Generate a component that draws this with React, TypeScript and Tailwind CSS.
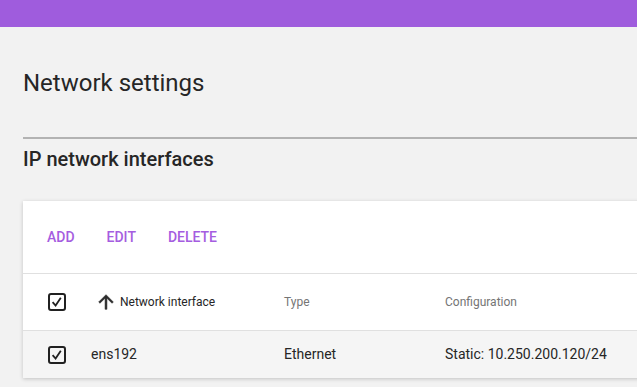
import React from "react";

function CheckIcon() {
  return (
    <svg viewBox="0 0 18 18" className="w-[18px] h-[18px] shrink-0">
      <rect x="1" y="1" width="16" height="16" rx="2" fill="none" stroke="#212121" strokeWidth="2" />
      <path d="M4.6 9.2 L7.6 12.6 L12.8 4.8" fill="none" stroke="#212121" strokeWidth="1.8" />
    </svg>
  );
}

function ArrowUp() {
  return (
    <svg viewBox="0 0 24 24" className="w-[22px] h-[22px] shrink-0" fill="#2b2b2b">
      <path d="M4 12l1.41 1.41L11 7.83V20h2V7.83l5.58 5.59L20 12l-8-8-8 8z" stroke="#2b2b2b" strokeWidth="0.6" />
    </svg>
  );
}

export default function App() {
  return (
    <div className="w-[637px] h-[387px] overflow-hidden bg-[#f2f2f2] font-['Roboto',sans-serif] text-[#212121]">
      {/* Top bar */}
      <div className="h-[27px] bg-[#9f5cdd]" />

      <div className="pl-[23px]">
        <h1 className="pt-[42px] h-[110px] text-[24px] leading-[28px] font-normal text-[#262626]">
          Network settings
        </h1>
        <div className="h-[2px] bg-[#b3b3b3]" />
        <h2 className="pt-[8px] h-[62px] text-[20px] leading-[24px] font-medium text-[#262626]">
          IP network interfaces
        </h2>

        {/* Card */}
        <div className="w-[640px] bg-white shadow-[0_1px_4px_rgba(0,0,0,0.2)]">
          <div className="h-[72px] flex items-center gap-[32px] pl-[24px] text-[14px] font-medium text-[#a55de0]">
            <span>ADD</span>
            <span>EDIT</span>
            <span>DELETE</span>
          </div>
          <div className="h-[57px] flex items-center border-t border-[#e0e0e0] text-[12px]">
            <div className="w-[72px] pl-[25px]">
              <CheckIcon />
            </div>
            <div className="w-[189px] flex items-center gap-[3px] text-[#262626]">
              <ArrowUp />
              <span>Network interface</span>
            </div>
            <div className="w-[161px] text-[#757575]">Type</div>
            <div className="text-[#757575]">Configuration</div>
          </div>
          <div className="h-[48px] flex items-center border-t border-[#e0e0e0] bg-[#f5f5f5] text-[14px] text-[#262626]">
            <div className="w-[68px] pl-[25px]">
              <CheckIcon />
            </div>
            <div className="w-[193px]">ens192</div>
            <div className="w-[161px]">Ethernet</div>
            <div>Static: 10.250.200.120/24</div>
          </div>
        </div>
      </div>
    </div>
  );
}
